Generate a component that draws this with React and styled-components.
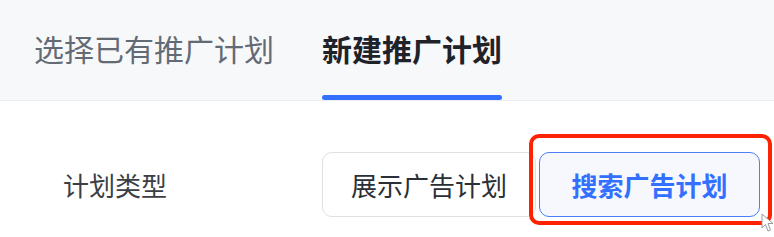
import React, { useState } from "react";
import styled, { createGlobalStyle } from "styled-components";

const tabs = ["选择已有推广计划", "新建推广计划"];
const planTypes = ["展示广告计划", "搜索广告计划"];

const App = () => {
  const [tab, setTab] = useState(1);
  const [type, setType] = useState(1);

  return (
    <>
      <GlobalStyle />
      <StPage>
        <StTabBar>
          {tabs.map((t, i) => (
            <StTab key={t} $active={tab === i} onClick={() => setTab(i)}>
              {t}
            </StTab>
          ))}
        </StTabBar>
        <StRow>
          <StLabel>计划类型</StLabel>
          <StGroup>
            {planTypes.map((p, i) => (
              <StOptionWrap key={p}>
                <StOption $active={type === i} $first={i === 0} onClick={() => setType(i)}>
                  {p}
                </StOption>
                {type === i && i === 1 && <StMark />}
              </StOptionWrap>
            ))}
          </StGroup>
        </StRow>
        <StCursor>
          <svg width="18" height="22" viewBox="0 0 18 22">
            <path d="M4 2 L4 16 L7.5 12.5 L10 19 L12.5 18 L10 11.5 L15 11.5 Z" fill="#fff" stroke="#9a9a9a" strokeWidth="1" />
          </svg>
        </StCursor>
      </StPage>
    </>
  );
};

export default App;

const GlobalStyle = createGlobalStyle`
  body {
    margin: 0;
    background: #fff;
    font-family: "Noto Sans CJK SC", "Noto Sans", sans-serif;
  }
`;

const StPage = styled.div`
  position: relative;
  width: 774px;
  height: 237px;
  overflow: hidden;
`;

const StTabBar = styled.div`
  height: 100px;
  background-color: #f7f8fa;
  border-bottom: 1px solid #eceef1;
  padding-left: 34px;

  display: flex;
  gap: 48px;
`;

const StTab = styled.div`
  position: relative;
  display: flex;
  align-items: center;
  padding-bottom: 4px;

  font-size: 30px;
  font-weight: ${(p) => (p.$active ? 700 : 400)};
  color: ${(p) => (p.$active ? "#1f2329" : "#646a73")};
  cursor: pointer;

  &::after {
    content: "";
    display: ${(p) => (p.$active ? "block" : "none")};
    position: absolute;
    left: 0;
    right: 0;
    bottom: 0;
    height: 5px;
    border-radius: 3px;
    background-color: #3370ff;
  }
`;

const StRow = styled.div`
  padding: 51px 0 0 63px;
  display: flex;
  align-items: center;
`;

const StLabel = styled.div`
  width: 259px;
  font-size: 26px;
  color: #3b3f45;
`;

const StGroup = styled.div`
  display: flex;
  gap: 3px;
`;

const StOptionWrap = styled.div`
  position: relative;
`;

const StOption = styled.button`
  box-sizing: border-box;
  width: ${(p) => (p.$first ? "214px" : "221px")};
  height: 65px;
  padding: 0;

  border: ${(p) => (p.$active ? "1.5px solid #4a7ff7" : "1px solid #dee0e3")};
  border-radius: 10px;
  background-color: ${(p) => (p.$active ? "#f6f8fe" : "#fff")};

  font-family: inherit;
  font-size: 26px;
  font-weight: ${(p) => (p.$active ? 700 : 400)};
  color: ${(p) => (p.$active ? "#3370ff" : "#2b2f36")};
  cursor: pointer;
`;

const StMark = styled.div`
  position: absolute;
  left: -10px;
  right: -12px;
  top: -18px;
  bottom: -8px;
  border: 4px solid #ff2200;
  border-radius: 10px;
  pointer-events: none;
`;

const StCursor = styled.div`
  position: absolute;
  left: 758px;
  top: 212px;
`;
